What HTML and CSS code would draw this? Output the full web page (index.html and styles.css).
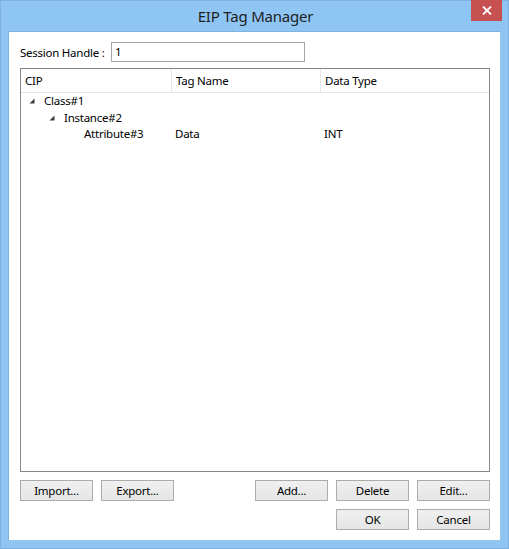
FILE: index.html
```html
<!DOCTYPE html>
<html>
<head>
<meta charset="utf-8">
<link rel="stylesheet" href="styles.css">
</head>
<body>
<div class="window">
  <div class="titlebar">
    <div class="title">EIP Tag Manager</div>
    <div class="close"><svg width="10" height="9" viewBox="0 0 10 9"><path d="M1 0.5 L9 8.5 M9 0.5 L1 8.5" stroke="#fff" stroke-width="1.8"/></svg></div>
  </div>
  <div class="client">
    <div class="session">
      <label class="session-label">Session Handle :</label>
      <div class="input">1</div>
    </div>
    <div class="list">
      <div class="header">
        <div class="hcell c1">CIP</div>
        <div class="hcell c2">Tag Name</div>
        <div class="hcell c3">Data Type</div>
      </div>
      <div class="rows">
        <div class="row">
          <div class="cell c1 lvl0"><svg class="tri" width="6" height="6" viewBox="0 0 6 6"><polygon points="5.5,0.5 5.5,5.5 0.5,5.5" fill="#3c3c3c"/></svg>Class#1</div>
        </div>
        <div class="row">
          <div class="cell c1 lvl1"><svg class="tri" width="6" height="6" viewBox="0 0 6 6"><polygon points="5.5,0.5 5.5,5.5 0.5,5.5" fill="#3c3c3c"/></svg>Instance#2</div>
        </div>
        <div class="row">
          <div class="cell c1 lvl2">Attribute#3</div>
          <div class="cell c2">Data</div>
          <div class="cell c3">INT</div>
        </div>
      </div>
    </div>
    <div class="btnrow">
      <button class="btn">Import...</button>
      <button class="btn">Export...</button>
      <div class="spacer"></div>
      <button class="btn">Add...</button>
      <button class="btn">Delete</button>
      <button class="btn">Edit...</button>
    </div>
    <div class="btnrow second">
      <div class="spacer"></div>
      <button class="btn">OK</button>
      <button class="btn">Cancel</button>
    </div>
  </div>
</div>
</body>
</html>
```
FILE: styles.css
```css
html, body {
  margin: 0;
  padding: 0;
}
body {
  width: 509px;
  height: 549px;
  overflow: hidden;
  font-family: "Noto Sans", "Open Sans", sans-serif;
  font-size: 11.5px;
  letter-spacing: -0.25px;
  color: #000;
}
.window {
  width: 509px;
  height: 549px;
  box-sizing: border-box;
  background: #8fc5f3;
  border: 1px solid #7fb2e0;
  display: flex;
  flex-direction: column;
}
.titlebar {
  position: relative;
  height: 30px;
  flex: none;
}
.title {
  text-align: center;
  font-size: 15px;
  letter-spacing: -0.2px;
  line-height: 31px;
  color: #1e1e1e;
  padding-left: 2px;
}
.close {
  position: absolute;
  top: -1px;
  right: 6px;
  width: 31px;
  height: 21px;
  background: #c75050;
  display: flex;
  align-items: center;
  justify-content: center;
}
.client {
  background: #fff;
  margin: 0 7px 8px 7px;
  flex: 1;
  padding: 10px 10px 10px 11px;
  display: flex;
  flex-direction: column;
  border: 1px solid #7fb2e0;
  border-color: #7fb2e0 #9cc8ee #9cc8ee #7fb2e0;
}
.session {
  display: flex;
  align-items: center;
  height: 20px;
}
.session-label {
  width: 91px;
  flex: none;
  white-space: nowrap;
}
.input {
  width: 189px;
  height: 18px;
  border: 1px solid #a5a5a5;
  line-height: 18px;
  padding-left: 3px;
  box-sizing: content-box;
}
.list {
  margin-top: 6px;
  height: 402px;
  border: 1px solid #828790;
  display: flex;
  flex-direction: column;
}
.header {
  display: flex;
  height: 23px;
  border-bottom: 1px solid #e5e5e5;
  flex: none;
}
.hcell {
  line-height: 23px;
  padding-left: 4px;
  box-sizing: border-box;
  border-right: 1px solid #e5e5e5;
  white-space: nowrap;
}
.c1 { width: 151px; flex: none; }
.c2 { width: 149px; flex: none; }
.c3 { flex: 1; }
.hcell.c3 { border-right: none; }
.row {
  display: flex;
  height: 16.5px;
  line-height: 16.5px;
}
.cell {
  box-sizing: border-box;
  white-space: nowrap;
  display: flex;
  align-items: center;
}
.cell.c2, .cell.c3 { padding-left: 3px; }
.lvl0 { padding-left: 8px; }
.lvl1 { padding-left: 28px; }
.lvl2 { padding-left: 63px; }
.tri {
  margin-right: 9px;
  flex: none;
}
.btnrow {
  display: flex;
  gap: 8px;
  margin-top: 8px;
}
.btnrow.second {
  margin-top: 8px;
}
.spacer { flex: 1; }
.btn {
  width: 73px;
  height: 21px;
  box-sizing: border-box;
  border: 1px solid #acacac;
  background: linear-gradient(#f0f0f0, #e5e5e5);
  font-family: "Noto Sans", "Open Sans", sans-serif;
  font-size: 11.5px;
  letter-spacing: -0.25px;
  color: #000;
  padding: 0;
  line-height: 19px;
}
```
